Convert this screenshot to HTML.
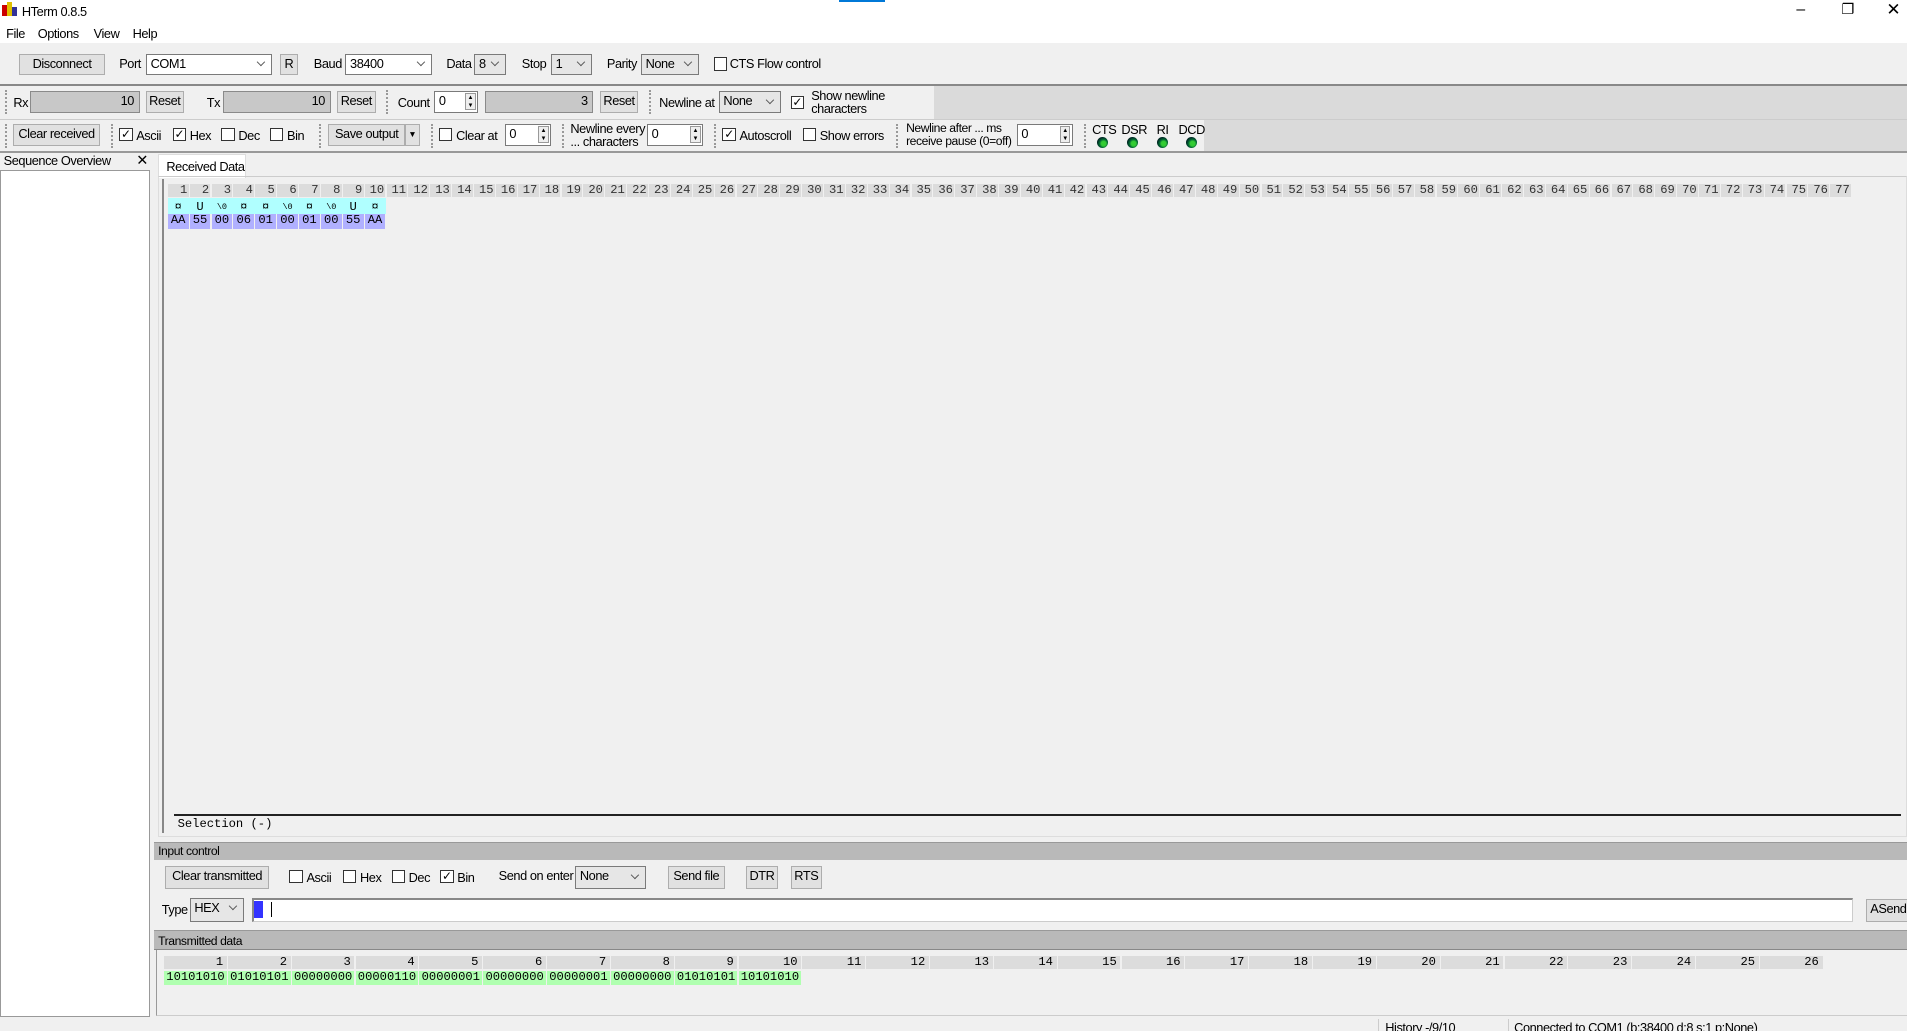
<!DOCTYPE html>
<html><head><meta charset="utf-8"><style>
*{box-sizing:border-box;margin:0;padding:0}
html,body{width:1907px;height:1031px;overflow:hidden;background:#f0f0f0}
#r{position:absolute;left:0;top:0;width:1568px;height:848px;zoom:1.21620;font-family:"Liberation Sans",sans-serif;font-size:10.5px;letter-spacing:-0.35px;color:#000;background:#f0f0f0;overflow:hidden}
.a{position:absolute;white-space:nowrap}
.b{position:absolute;background:#e1e1e1;border:1px solid #adadad;text-align:center;line-height:15px;white-space:nowrap}
.c{position:absolute;background:#fff;border:1px solid #7a7a7a;padding-left:3px;line-height:15px}
.g{background:#e6e6e6}
.c:after{content:"";position:absolute;right:6px;top:4px;width:4px;height:4px;border-right:1px solid #555;border-bottom:1px solid #555;transform:rotate(45deg)}
.k{position:absolute;width:11px;height:11px;border:1px solid #333;background:#fff;font-size:10px;line-height:9px;text-align:center}
.f{position:absolute;background:#c8c8c8;border:1px solid #8a8a8a;text-align:right;padding-right:4px;line-height:15px}
.s{position:absolute;background:#fff;border:1px solid #7a7a7a;padding-left:3px;line-height:15px}
.s i{position:absolute;right:1px;top:1px;width:9px;height:14px;border:1px solid #999;background:#eee;font-style:normal;font-size:5px;line-height:6px;text-align:center}
.dots{position:absolute;width:2px;border-left:2px dotted #999}
.row{position:absolute;display:flex;letter-spacing:0}
.row span{display:block;margin-right:1px;text-align:right;font-family:"Liberation Mono",monospace;font-size:10px;line-height:11px}
.h span{background:#dcdcdc;width:17px;padding-right:1px;color:#333}
.t span{width:51.5px}
.led{position:absolute;width:9px;height:9px;border-radius:50%;background:radial-gradient(circle at 60% 60%,#3c3 0 25%,#063 45%,#022 70%);top:113px}
</style></head><body><div id="r">
<div class="a" style="left:0;top:0;width:1568px;height:19px;background:#fff"></div>
<div class="a" style="left:2px;top:4px;width:4px;height:9px;background:#c00"></div>
<div class="a" style="left:6px;top:2px;width:4px;height:11px;background:#e0c000"></div>
<div class="a" style="left:10px;top:6px;width:4px;height:7px;background:#339"></div>
<div class="a" style="left:18px;top:3px">HTerm 0.8.5</div>
<div class="a" style="left:690px;top:0;width:38px;height:2px;background:#0078d7"></div>
<div class="a" style="left:1477px;top:1px;font-size:13px">–</div>
<div class="a" style="left:1514px;top:1px;font-size:12px">❐</div>
<div class="a" style="left:1551px;top:0;font-size:14px">✕</div>
<div class="a" style="left:0;top:19px;width:1568px;height:16px;background:#fff"></div>
<div class="a" style="left:5px;top:21px">File</div>
<div class="a" style="left:31px;top:21px">Options</div>
<div class="a" style="left:77px;top:21px">View</div>
<div class="a" style="left:109px;top:21px">Help</div>
<div class="a" style="left:0;top:69px;width:1568px;height:2px;background:#888"></div>
<div class="b" style="left:16px;top:44px;width:70px;height:18px">Disconnect</div>
<div class="a" style="left:98px;top:46px">Port</div>
<div class="c" style="left:120px;top:44px;width:104px;height:18px">COM1</div>
<div class="b" style="left:230px;top:44px;width:15px;height:18px">R</div>
<div class="a" style="left:258px;top:46px">Baud</div>
<div class="c" style="left:284px;top:44px;width:71px;height:18px">38400</div>
<div class="a" style="left:367px;top:46px">Data</div>
<div class="c g" style="left:390px;top:44px;width:26px;height:18px">8</div>
<div class="a" style="left:429px;top:46px">Stop</div>
<div class="c g" style="left:453px;top:44px;width:34px;height:18px">1</div>
<div class="a" style="left:499px;top:46px">Parity</div>
<div class="c g" style="left:527px;top:44px;width:48px;height:18px">None</div>
<div class="k" style="left:587px;top:47px"></div>
<div class="a" style="left:600px;top:46px">CTS Flow control</div>
<div class="a" style="left:768px;top:71px;width:800px;height:27px;background:#dadada"></div>
<div class="a" style="left:990px;top:98px;width:578px;height:27px;background:#dadada"></div>
<div class="dots" style="left:4px;top:74px;height:20px"></div>
<div class="a" style="left:11px;top:78px">Rx</div>
<div class="f" style="left:25px;top:75px;width:90px;height:18px">10</div>
<div class="b" style="left:120px;top:75px;width:31px;height:18px">Reset</div>
<div class="a" style="left:170px;top:78px">Tx</div>
<div class="f" style="left:183px;top:75px;width:89px;height:18px">10</div>
<div class="b" style="left:277px;top:75px;width:32px;height:18px">Reset</div>
<div class="dots" style="left:317px;top:74px;height:20px"></div>
<div class="a" style="left:327px;top:78px">Count</div>
<div class="s" style="left:357px;top:75px;width:36px;height:18px">0<i>▲<br>▼</i></div>
<div class="f" style="left:399px;top:75px;width:89px;height:18px">3</div>
<div class="b" style="left:493px;top:75px;width:32px;height:18px">Reset</div>
<div class="dots" style="left:534px;top:74px;height:20px"></div>
<div class="a" style="left:542px;top:78px">Newline at</div>
<div class="c g" style="left:591px;top:75px;width:51px;height:18px">None</div>
<div class="k" style="left:650px;top:79px">✓</div>
<div class="a" style="left:667px;top:73px;line-height:11px">Show newline<br>characters</div>
<div class="a" style="left:0;top:98px;width:1568px;height:1px;background:#ccc"></div>
<div class="dots" style="left:4px;top:102px;height:20px"></div>
<div class="b" style="left:11px;top:102px;width:71px;height:18px">Clear received</div>
<div class="dots" style="left:91px;top:102px;height:20px"></div>
<div class="k" style="left:98px;top:105px">✓</div><div class="a" style="left:112px;top:105px">Ascii</div>
<div class="k" style="left:142px;top:105px">✓</div><div class="a" style="left:156px;top:105px">Hex</div>
<div class="k" style="left:182px;top:105px"></div><div class="a" style="left:196px;top:105px">Dec</div>
<div class="k" style="left:222px;top:105px"></div><div class="a" style="left:236px;top:105px">Bin</div>
<div class="dots" style="left:262px;top:102px;height:20px"></div>
<div class="b" style="left:270px;top:102px;width:63px;height:18px">Save output</div>
<div class="b" style="left:333px;top:102px;width:12px;height:18px;font-size:7px">▼</div>
<div class="dots" style="left:354px;top:102px;height:20px"></div>
<div class="k" style="left:361px;top:105px"></div><div class="a" style="left:375px;top:105px">Clear at</div>
<div class="s" style="left:415px;top:102px;width:38px;height:18px">0<i>▲<br>▼</i></div>
<div class="dots" style="left:462px;top:102px;height:20px"></div>
<div class="a" style="left:469px;top:100px;line-height:11px">Newline every<br>... characters</div>
<div class="s" style="left:532px;top:102px;width:46px;height:18px">0<i>▲<br>▼</i></div>
<div class="dots" style="left:587px;top:102px;height:20px"></div>
<div class="k" style="left:594px;top:105px">✓</div><div class="a" style="left:608px;top:105px">Autoscroll</div>
<div class="k" style="left:660px;top:105px"></div><div class="a" style="left:674px;top:105px">Show errors</div>
<div class="dots" style="left:737px;top:102px;height:20px"></div>
<div class="a" style="left:745px;top:100px;line-height:11px;font-size:10px">Newline after ... ms<br>receive pause (0=off)</div>
<div class="s" style="left:836px;top:102px;width:46px;height:18px">0<i>▲<br>▼</i></div>
<div class="dots" style="left:891px;top:102px;height:20px"></div>
<div class="a" style="left:898px;top:100px">CTS</div><div class="a" style="left:922px;top:100px">DSR</div>
<div class="a" style="left:951px;top:100px">RI</div><div class="a" style="left:969px;top:100px">DCD</div>
<div class="led" style="left:902px"></div><div class="led" style="left:927px"></div><div class="led" style="left:951px"></div><div class="led" style="left:975px"></div>
<div class="a" style="left:0;top:124px;width:1568px;height:2px;background:#999"></div>
<div class="a" style="left:3px;top:126px">Sequence Overview</div>
<div class="a" style="left:112px;top:125px;font-size:12px">✕</div>
<div class="a" style="left:0;top:140px;width:123px;height:696px;background:#fff;border:1px solid #999"></div>
<div class="a" style="left:130px;top:127px;width:72px;height:19px;background:#fff;border:1px solid #ddd;border-bottom:none;padding:3px 0 0 6px">Received Data</div>
<div class="a" style="left:130px;top:145px;width:1438px;height:543px;border:1px solid #ddd;border-top:1px solid #ccc"></div>
<div class="a" style="left:133px;top:147px;width:2px;height:538px;background:#888"></div>
<div class="row h" style="left:138px;top:151px"><span>1</span><span>2</span><span>3</span><span>4</span><span>5</span><span>6</span><span>7</span><span>8</span><span>9</span><span>10</span><span>11</span><span>12</span><span>13</span><span>14</span><span>15</span><span>16</span><span>17</span><span>18</span><span>19</span><span>20</span><span>21</span><span>22</span><span>23</span><span>24</span><span>25</span><span>26</span><span>27</span><span>28</span><span>29</span><span>30</span><span>31</span><span>32</span><span>33</span><span>34</span><span>35</span><span>36</span><span>37</span><span>38</span><span>39</span><span>40</span><span>41</span><span>42</span><span>43</span><span>44</span><span>45</span><span>46</span><span>47</span><span>48</span><span>49</span><span>50</span><span>51</span><span>52</span><span>53</span><span>54</span><span>55</span><span>56</span><span>57</span><span>58</span><span>59</span><span>60</span><span>61</span><span>62</span><span>63</span><span>64</span><span>65</span><span>66</span><span>67</span><span>68</span><span>69</span><span>70</span><span>71</span><span>72</span><span>73</span><span>74</span><span>75</span><span>76</span><span>77</span></div>
<div class="a" style="left:138px;top:163px;width:179px;height:13px;background:#b0ffff"></div>
<div class="row" style="left:138px;top:165px"><span style="width:17px;text-align:center">¤</span><span style="width:17px;text-align:center">U</span><span style="width:17px;text-align:center;font-size:7px">\0</span><span style="width:17px;text-align:center">¤</span><span style="width:17px;text-align:center">¤</span><span style="width:17px;text-align:center;font-size:7px">\0</span><span style="width:17px;text-align:center">¤</span><span style="width:17px;text-align:center;font-size:7px">\0</span><span style="width:17px;text-align:center">U</span><span style="width:17px;text-align:center">¤</span></div>
<div class="row" style="left:138px;top:176px"><span style="width:17px;background:#b0b0ff;text-align:center;height:12px">AA</span><span style="width:17px;background:#b0b0ff;text-align:center">55</span><span style="width:17px;background:#b0b0ff;text-align:center">00</span><span style="width:17px;background:#b0b0ff;text-align:center">06</span><span style="width:17px;background:#b0b0ff;text-align:center">01</span><span style="width:17px;background:#b0b0ff;text-align:center">00</span><span style="width:17px;background:#b0b0ff;text-align:center">01</span><span style="width:17px;background:#b0b0ff;text-align:center">00</span><span style="width:17px;background:#b0b0ff;text-align:center">55</span><span style="width:17px;background:#b0b0ff;text-align:center">AA</span></div>
<div class="a" style="left:143px;top:669px;width:1420px;height:2px;background:#222"></div>
<div class="a" style="left:146px;top:672px;font-family:'Liberation Mono',monospace;font-size:10px;letter-spacing:0">Selection (-)</div>
<div class="a" style="left:127px;top:692px;width:1441px;height:15px;background:#b9b9b9;border-top:1px solid #999;padding:1px 0 0 3px;font-size:10px">Input control</div>
<div class="b" style="left:136px;top:712px;width:85px;height:19px">Clear transmitted</div>
<div class="k" style="left:238px;top:715px"></div><div class="a" style="left:252px;top:715px">Ascii</div>
<div class="k" style="left:282px;top:715px"></div><div class="a" style="left:296px;top:715px">Hex</div>
<div class="k" style="left:322px;top:715px"></div><div class="a" style="left:336px;top:715px">Dec</div>
<div class="k" style="left:362px;top:715px">✓</div><div class="a" style="left:376px;top:715px">Bin</div>
<div class="a" style="left:410px;top:714px">Send on enter</div>
<div class="c g" style="left:473px;top:712px;width:58px;height:19px">None</div>
<div class="b" style="left:549px;top:712px;width:47px;height:19px">Send file</div>
<div class="b" style="left:613px;top:712px;width:27px;height:19px">DTR</div>
<div class="b" style="left:650px;top:712px;width:26px;height:19px">RTS</div>
<div class="a" style="left:133px;top:742px">Type</div>
<div class="c g" style="left:156px;top:738px;width:45px;height:20px">HEX</div>
<div class="a" style="left:207px;top:738px;width:1317px;height:20px;background:#fff;border:1px solid #ccc;border-top:2px solid #888;border-left:2px solid #888"></div>
<div class="a" style="left:209px;top:741px;width:7px;height:14px;background:#3333ff"></div>
<div class="a" style="left:223px;top:742px;width:1px;height:12px;background:#000"></div>
<div class="b" style="left:1534px;top:739px;width:40px;height:19px;text-align:left;padding-left:3px">ASend</div>
<div class="a" style="left:127px;top:765px;width:1441px;height:16px;background:#b9b9b9;border-top:1px solid #999;border-bottom:1px solid #888;padding:2px 0 0 3px;font-size:10px">Transmitted data</div>
<div class="a" style="left:128px;top:781px;width:1440px;height:54px;border-left:1px solid #999;border-bottom:1px solid #ccc"></div>
<div class="row t" style="left:135px;top:786px"><span style="background:#dcdcdc;padding-right:3px">1</span><span style="background:#dcdcdc;padding-right:3px">2</span><span style="background:#dcdcdc;padding-right:3px">3</span><span style="background:#dcdcdc;padding-right:3px">4</span><span style="background:#dcdcdc;padding-right:3px">5</span><span style="background:#dcdcdc;padding-right:3px">6</span><span style="background:#dcdcdc;padding-right:3px">7</span><span style="background:#dcdcdc;padding-right:3px">8</span><span style="background:#dcdcdc;padding-right:3px">9</span><span style="background:#dcdcdc;padding-right:3px">10</span><span style="background:#dcdcdc;padding-right:3px">11</span><span style="background:#dcdcdc;padding-right:3px">12</span><span style="background:#dcdcdc;padding-right:3px">13</span><span style="background:#dcdcdc;padding-right:3px">14</span><span style="background:#dcdcdc;padding-right:3px">15</span><span style="background:#dcdcdc;padding-right:3px">16</span><span style="background:#dcdcdc;padding-right:3px">17</span><span style="background:#dcdcdc;padding-right:3px">18</span><span style="background:#dcdcdc;padding-right:3px">19</span><span style="background:#dcdcdc;padding-right:3px">20</span><span style="background:#dcdcdc;padding-right:3px">21</span><span style="background:#dcdcdc;padding-right:3px">22</span><span style="background:#dcdcdc;padding-right:3px">23</span><span style="background:#dcdcdc;padding-right:3px">24</span><span style="background:#dcdcdc;padding-right:3px">25</span><span style="background:#dcdcdc;padding-right:3px">26</span></div>
<div class="row t" style="left:135px;top:798px"><span style="background:#b0ffb0;text-align:center;height:12px">10101010</span><span style="background:#b0ffb0;text-align:center">01010101</span><span style="background:#b0ffb0;text-align:center">00000000</span><span style="background:#b0ffb0;text-align:center">00000110</span><span style="background:#b0ffb0;text-align:center">00000001</span><span style="background:#b0ffb0;text-align:center">00000000</span><span style="background:#b0ffb0;text-align:center">00000001</span><span style="background:#b0ffb0;text-align:center">00000000</span><span style="background:#b0ffb0;text-align:center">01010101</span><span style="background:#b0ffb0;text-align:center">10101010</span></div>
<div class="a" style="left:1133px;top:838px;width:1px;height:10px;background:#ccc"></div>
<div class="a" style="left:1139px;top:839px">History -/9/10</div>
<div class="a" style="left:1240px;top:838px;width:1px;height:10px;background:#ccc"></div>
<div class="a" style="left:1245px;top:839px">Connected to COM1 (b:38400 d:8 s:1 p:None)</div>
</div></body></html>
